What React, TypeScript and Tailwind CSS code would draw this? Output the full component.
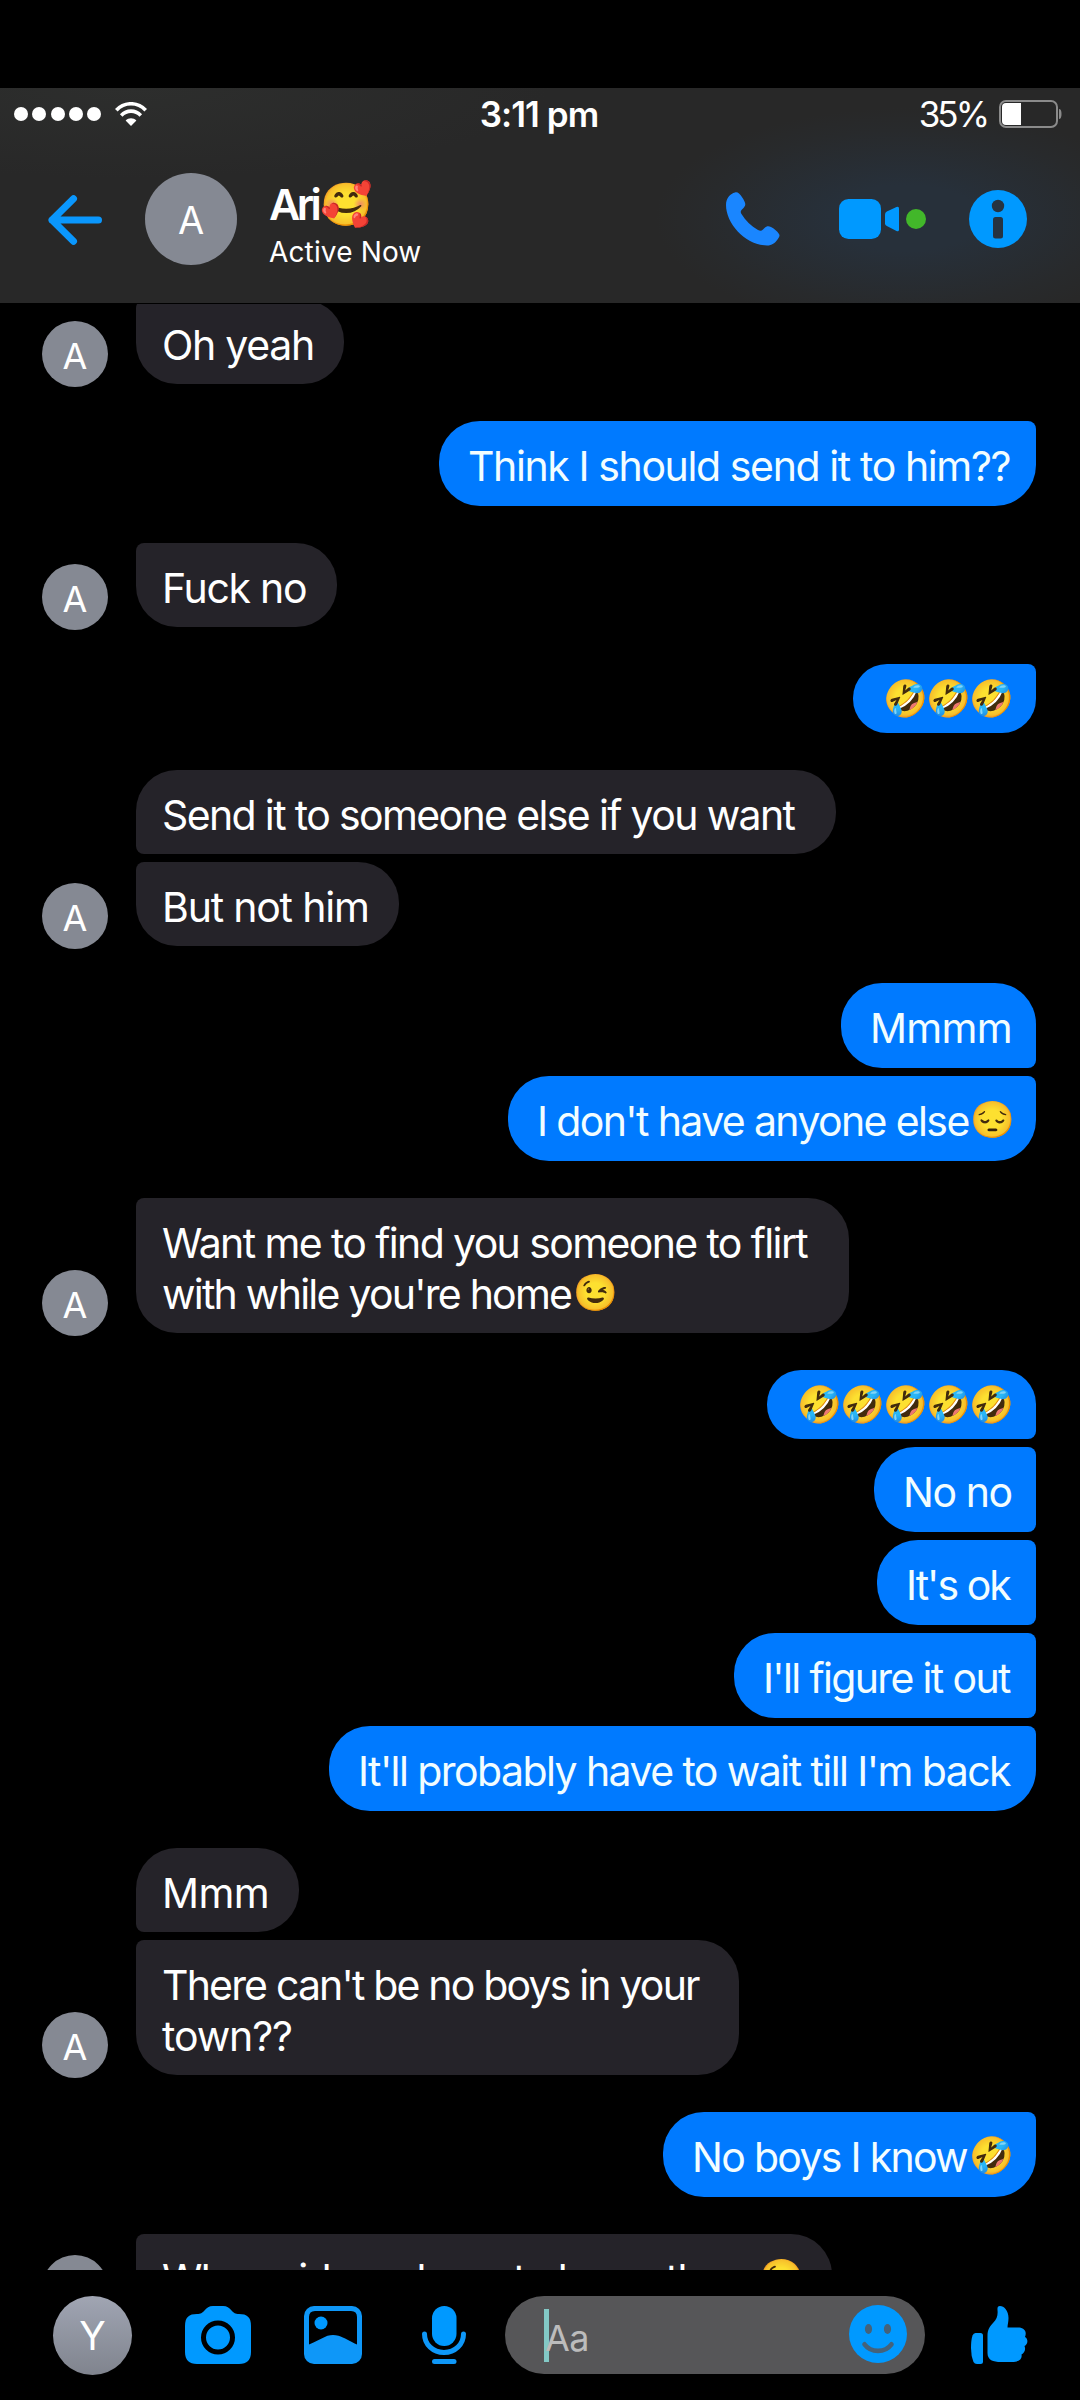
import React from 'react';
import clsx from 'clsx';

type Message = {
  text?: string;
  second?: string;
  emoji?: string[];
  box: string;
  tracking?: string;
  secondTracking?: string;
};

type Group = {
  from: 'me' | 'ari';
  messages: Message[];
};

const groups: Group[] = [
  { from: 'ari', messages: [{ text: 'Oh yeah', box: 'w-[208px]', tracking: 'tracking-[-1.3px]' }] },
  {
    from: 'me',
    messages: [{ text: 'Think I should send it to him??', box: 'w-[597px]', tracking: 'tracking-[-1.39px]' }],
  },
  { from: 'ari', messages: [{ text: 'Fuck no', box: 'w-[201px]', tracking: 'tracking-[-1.3px]' }] },
  { from: 'me', messages: [{ emoji: ['🤣', '🤣', '🤣'], box: 'w-[183px]' }] },
  {
    from: 'ari',
    messages: [
      { text: 'Send it to someone else if you want', box: 'w-[700px]', tracking: 'tracking-[-1.64px]' },
      { text: 'But not him', box: 'w-[263px]', tracking: 'tracking-[-1.2px]' },
    ],
  },
  {
    from: 'me',
    messages: [
      { text: 'Mmmm', box: 'w-[195px]', tracking: 'tracking-[-0.7px]' },
      { text: "I don't have anyone else", emoji: ['😔'], box: 'w-[528px]', tracking: 'tracking-[-1.62px]' },
    ],
  },
  {
    from: 'ari',
    messages: [
      {
        text: 'Want me to find you someone to flirt',
        second: "with while you're home",
        emoji: ['😉'],
        box: 'w-[713px]',
        tracking: 'tracking-[-1.62px]',
        secondTracking: 'tracking-[-1.76px]',
      },
    ],
  },
  {
    from: 'me',
    messages: [
      { emoji: ['🤣', '🤣', '🤣', '🤣', '🤣'], box: 'w-[269px]' },
      { text: 'No no', box: 'w-[162px]', tracking: 'tracking-[-1.45px]' },
      { text: "It's ok", box: 'w-[159px]', tracking: 'tracking-[-1.95px]' },
      { text: "I'll figure it out", box: 'w-[302px]', tracking: 'tracking-[-1.65px]' },
      {
        text: "It'll probably have to wait till I'm back",
        box: 'w-[707px]',
        tracking: 'tracking-[-1.57px]',
      },
    ],
  },
  {
    from: 'ari',
    messages: [
      { text: 'Mmm', box: 'w-[163px]', tracking: 'tracking-[-0.6px]' },
      {
        text: "There can't be no boys in your",
        second: 'town??',
        box: 'w-[603px]',
        tracking: 'tracking-[-1.82px]',
        secondTracking: 'tracking-[-1.1px]',
      },
    ],
  },
  {
    from: 'me',
    messages: [{ text: 'No boys I know', emoji: ['🤣'], box: 'w-[373px]', tracking: 'tracking-[-1.7px]' }],
  },
  {
    from: 'ari',
    messages: [
      {
        text: 'Who said you have to know them',
        emoji: ['😉'],
        box: 'w-[696px]',
        tracking: 'tracking-[-1.54px]',
      },
    ],
  },
];

const Emoji = ({ char }: { char: string }) => (
  <span className="inline-block w-[43px] align-[4px] text-[36px] leading-none tracking-normal">{char}</span>
);

const Bubble = ({
  message,
  mine,
  first,
  last,
}: {
  message: Message;
  mine: boolean;
  first: boolean;
  last: boolean;
}) => {
  const { text, second, emoji = [], box, tracking, secondTracking } = message;
  const icons = emoji.map((char, i) => <Emoji key={i} char={char} />);

  // a lone bubble has the small corner on top, a run has it where bubbles meet
  const alone = first && last;
  const smallTop = !first || alone;
  const smallBottom = !last;

  const corners = mine
    ? clsx(
        text ? 'rounded-[41px]' : 'rounded-[34px]',
        smallTop && 'rounded-tr-[8px]',
        smallBottom && 'rounded-br-[8px]',
      )
    : clsx('rounded-[41px]', smallTop && 'rounded-tl-[8px]', smallBottom && 'rounded-bl-[8px]');

  if (!text) {
    return (
      <div className={clsx('flex h-[69px] items-center bg-[#007aff] pb-[2px] pl-[30px]', corners, box)}>{icons}</div>
    );
  }

  return (
    <div
      className={clsx(
        'pt-[20px] text-[41px] leading-[51px] whitespace-nowrap',
        mine ? 'h-[85px] bg-[#007aff] pl-[29px] text-[#f2fdff]' : 'bg-[#252329] pl-[26px] text-white',
        !mine && (second ? 'h-[135px]' : 'h-[84px]'),
        corners,
        box,
      )}
    >
      <p className={clsx('flex h-[51px]', tracking)}>
        {text}
        {!second && icons.length > 0 && <span className="ml-[2px]">{icons}</span>}
      </p>
      {second && (
        <p className={clsx('flex h-[51px]', secondTracking)}>
          {second}
          {icons.length > 0 && <span className="ml-[2px]">{icons}</span>}
        </p>
      )}
    </div>
  );
};

const MessageGroup = ({ group }: { group: Group }) => {
  const mine = group.from === 'me';
  const list = group.messages.map((message, i) => (
    <Bubble
      key={i}
      message={message}
      mine={mine}
      first={i === 0}
      last={i === group.messages.length - 1}
    />
  ));

  if (mine) {
    return <div className="flex flex-col items-end gap-2 pr-[44px]">{list}</div>;
  }

  return (
    <div className="flex items-end gap-[28px] pl-[42px]">
      <div className="-mb-[3px] flex size-[66px] shrink-0 items-center justify-center rounded-full bg-[#858993] pt-[3px] text-[36px] text-white">
        A
      </div>
      <div className="flex flex-col gap-2">{list}</div>
    </div>
  );
};

const StatusBar = () => (
  <div className="flex h-[52px] items-center justify-between pr-[18px] pl-[14px] text-white">
    <div className="flex w-[300px] items-center">
      <div className="flex gap-[4.3px]">
        <span className="size-[14px] rounded-full bg-white" />
        <span className="size-[14px] rounded-full bg-white" />
        <span className="size-[14px] rounded-full bg-white" />
        <span className="size-[14px] rounded-full bg-white" />
        <span className="size-[14px] rounded-full bg-white" />
      </div>
      <svg className="ml-[14px] h-[24px] w-[32px]" viewBox="0 0 32 24" fill="none" stroke="#fff" strokeWidth="3.6">
        <path d="M1.300 8.200C9.500-.400 22.500-.400 30.700 8.200" />
        <path d="M6.200 13.400C11.800 7.700 20.200 7.700 25.800 13.400" />
        <path d="M16 24L10.600 18.400C13.600 15.600 18.400 15.600 21.400 18.400Z" fill="#fff" stroke="none" />
      </svg>
    </div>
    <div className="ml-[2px] text-[35px] leading-none font-semibold tracking-[-0.95px]">3:11 pm</div>
    <div className="flex w-[300px] items-center justify-end">
      <span className="text-[35px] leading-none tracking-[-3px]">35%</span>
      <svg className="ml-[12px] h-[28px] w-[63px]" viewBox="0 0 63 28" fill="none">
        <rect x="1" y="1" width="57" height="26" rx="6" stroke="#8b8b8b" strokeWidth="2" />
        <path d="M22 3H7Q3 3 3 7V21Q3 25 7 25H22Z" fill="#fff" />
        <path d="M60 9Q62.500 9 62.500 14T60 19Z" fill="#8b8b8b" />
      </svg>
    </div>
  </div>
);

const Header = () => (
  <header className="h-[215px] bg-[#282828] bg-[radial-gradient(ellipse_250px_110px_at_905px_130px,#27303a_0%,#27303a_30%,#282a2c_80%,#28282800_100%),radial-gradient(ellipse_420px_90px_at_130px_0px,#2d2e2d,#28282800)]">
    <StatusBar />
    <div className="flex h-[158px] items-center pr-[53px] pl-[48px]">
      <svg className="mt-[2px] h-[50px] w-[54px]" viewBox="0 0 54 50" fill="none" stroke="#0a97fd" strokeWidth="7" strokeLinecap="round" strokeLinejoin="round">
        <path d="M50.500 25H4M25.500 3.800L4 25L25.500 46.200" />
      </svg>
      <div className="ml-[43px] flex size-[92px] items-center justify-center rounded-full bg-[#858993] pt-[2px] text-[38px] text-white">
        A
      </div>
      <div className="ml-[32px] flex-1 pt-[8px] text-white">
        <div className="flex h-[52px] items-center text-[43px] leading-[52px] font-semibold tracking-[-3.6px]">
          Ari
          <span className="ml-[2px] text-[42px] leading-none font-normal tracking-normal">🥰</span>
        </div>
        <div className="mt-[5px] text-[28px] leading-[34px] tracking-[0.15px]">Active Now</div>
      </div>
      <svg className="h-[54px] w-[54px]" viewBox="0 0 54 54" fill="#1a86ff">
        <path d="M9 .5C4.500 1.500 0 6 0 13C0 32 20 53.500 41 53.500C46 53.500 49 51 51.500 47.500C53.500 45 54 43.500 53 42C51 39 48 36.500 45 35C42.500 33.800 40.500 34 38.500 36L37 37.500C35.500 39 34 39 32 38C25 34 19.500 28.500 15.500 22C14.300 20 14.500 19 16.500 17L17.500 16C19.500 13.500 19.800 12 18.500 9.500C17 6 15 3.500 13 1.500C11.800.5 10.500 0 9 .5Z" />
      </svg>
      <div className="ml-[59px] flex items-center gap-[6px]">
        <svg className="h-[40px] w-[61px]" viewBox="0 0 61 40" fill="#0099ff">
          <rect width="42" height="40" rx="9.500" />
          <path d="M46 15.500Q46 13.500 47.800 12.500L57.500 7.900Q60 7 60 9.500V30.500Q60 33 57.500 32.100L47.800 27Q46 26 46 24.500Z" />
        </svg>
        <span className="size-[20px] rounded-full bg-[#42b72a]" />
      </div>
      <svg className="ml-[43px] size-[58px]" viewBox="0 0 58 58">
        <circle cx="29" cy="29" r="29" fill="#0099ff" />
        <circle cx="29" cy="16" r="6.200" fill="#263341" />
        <rect x="24" y="27" width="10" height="21.500" rx="2.500" fill="#263341" />
      </svg>
    </div>
  </header>
);

const Composer = () => (
  <footer className="flex h-[130px] items-center bg-black pr-[52px] pl-[53px]">
    <div className="flex size-[79px] items-center justify-center rounded-full bg-linear-to-b from-[#a0a5b3] to-[#80848e] pt-[3px] text-[39px] text-white">
      Y
    </div>
    <svg className="ml-[53px] h-[58px] w-[66px]" viewBox="0 0 66 58" fill="#0099ff">
      <path d="M0 20C0 11 4 8 12 8C16 8 17 7 19 5C22 1.500 24 0 28 0H38C42 0 44 1.500 47 5C49 7 50 8 54 8C62 8 66 11 66 20V46C66 54 62 58 54 58H12C4 58 0 54 0 46Z" />
      <circle cx="33" cy="31.500" r="14.500" fill="none" stroke="#000" strokeWidth="5" />
    </svg>
    <svg className="ml-[53px] size-[58px]" viewBox="0 0 58 58">
      <rect width="58" height="58" rx="10" fill="#0e97f8" />
      <path d="M5 11Q5 5 11 5H47Q53 5 53 11V38.500C47 36 40 31.500 34.500 29.800Q29 28 23.500 29.800C17 32.500 11 36 5 38.500Z" fill="#000" />
      <circle cx="17" cy="17" r="6.500" fill="#0099ff" />
    </svg>
    <svg className="ml-[60px] h-[58px] w-[44px]" viewBox="0 0 44 58" fill="none" stroke="#0e97f8" strokeWidth="5" strokeLinecap="round">
      <rect x="10" y="0" width="24.500" height="40" rx="12.200" fill="#0099ff" stroke="none" />
      <path d="M2.500 28C2.500 38.500 11 46.500 22 46.500S41.500 38.500 41.500 28" />
      <path d="M12.500 55.500H32" />
    </svg>
    <div className="ml-[39px] flex h-[78px] w-[420px] items-center rounded-full bg-[#565658] pr-[18px] pl-[39px]">
      <span className="h-[53px] w-[5px] bg-[#83c9c6]" />
      <span className="-ml-[4px] flex-1 pt-[5px] text-[36px] tracking-[-0.5px] text-[#bcbcbc]">Aa</span>
      <svg className="size-[58px] -translate-y-px" viewBox="0 0 58 58">
        <circle cx="29" cy="29" r="29" fill="#0099ff" />
        <ellipse cx="19.500" cy="24" rx="3.600" ry="5" fill="#45627a" />
        <ellipse cx="38.500" cy="24" rx="3.600" ry="5" fill="#45627a" />
        <path d="M15.500 39.300C22 48 36 48 42.500 39.300" fill="none" stroke="#45627a" strokeWidth="4.600" strokeLinecap="round" />
      </svg>
    </div>
    <svg className="ml-[46px] h-[58px] w-[57px]" viewBox="0 0 57 58" fill="#0099ff">
      <path d="M4.500 27H9.500Q12 27 12 29.500V55.500Q12 58 9.500 58H6Q3.500 58 2.500 56Q0 50 0 42Q0 34 1.500 29.500Q2.500 27 4.500 27Z" />
      <path d="M29 0C33 0 37.500 4.500 37.500 12C37.500 16 36.500 18.500 36.500 21.500H47C51 21.500 54 23.500 54.500 26C55 28 54.500 29.500 54 31C57.500 33 57 38 53.500 40C55 43.500 53.500 47 50.500 48.500C51.500 52.500 48.500 56 41 56H30C22 56 16.500 54 16.500 47V30C16.500 23 19 20.500 22 17C26 12.500 27 9.500 26.500 4C26.300 1.500 26.800 0 29 0Z" />
    </svg>
  </footer>
);

const App = () => {
  return (
    <div className="flex h-[2400px] w-[1080px] flex-col overflow-hidden bg-black pt-[88px] font-[Inter,'Noto_Color_Emoji',sans-serif]">
      <Header />
      <main className="mt-px h-[1966px] overflow-hidden">
        <div className="-mt-[4px] flex flex-col gap-[37px]">
          {groups.map((group, i) => (
            <MessageGroup key={i} group={group} />
          ))}
        </div>
      </main>
      <Composer />
    </div>
  );
};

export default App;
